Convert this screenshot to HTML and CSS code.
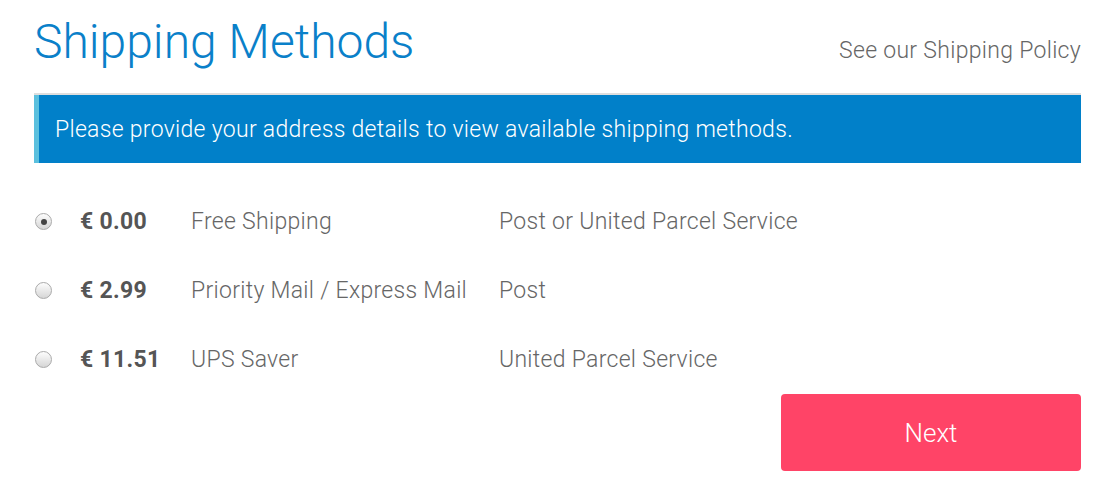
FILE: index.html
```html
<!DOCTYPE html>
<html lang="en">
<head>
    <meta charset="UTF-8">
    <meta name="viewport" content="width=device-width, initial-scale=1.0">
    <title>Shipping Methods</title>
    <link rel="stylesheet" href="styles.css">
</head>
<body>
    <div class="checkout">
        <div class="header">
            <h1>Shipping Methods</h1>
            <a class="policy-link" href="#">See our Shipping Policy</a>
        </div>

        <div class="alert">Please provide your address details to view available shipping methods.</div>

        <ul class="methods">
            <li>
                <input type="radio" name="shipping" class="radio" checked>
                <span class="price">€ 0.00</span>
                <span class="name">Free Shipping</span>
                <span class="carrier">Post or United Parcel Service</span>
            </li>
            <li>
                <input type="radio" name="shipping" class="radio">
                <span class="price">€ 2.99</span>
                <span class="name">Priority Mail / Express Mail</span>
                <span class="carrier">Post</span>
            </li>
            <li>
                <input type="radio" name="shipping" class="radio">
                <span class="price">€ 11.51</span>
                <span class="name">UPS Saver</span>
                <span class="carrier">United Parcel Service</span>
            </li>
        </ul>

        <div class="actions">
            <button class="next-btn">Next</button>
        </div>
    </div>
</body>
</html>
```

FILE: styles.css
```css
body {
    font-family: Roboto, "Liberation Sans", sans-serif;
    font-weight: 300;
    margin: 0;
    background-color: #fff;
}
.checkout {
    padding: 14px 12px 0 34px;
}
.header {
    display: flex;
    justify-content: space-between;
    align-items: baseline;
    padding-bottom: 23px;
    border-bottom: 2px solid #dedede;
}
h1 {
    margin: 0;
    font-size: 48px;
    font-weight: 300;
    line-height: 56px;
    color: #0a80c9;
}
.policy-link {
    font-size: 23px;
    letter-spacing: 0.3px;
    line-height: 26px;
    color: #666;
    text-decoration: none;
}
.alert {
    background-color: #0180c9;
    border-left: 5px solid #5bc0de;
    color: #fff;
    font-size: 23px;
    letter-spacing: 0.3px;
    line-height: 26px;
    padding: 22px 16px 20px 16px;
}
.methods {
    list-style-type: none;
    margin: 24px 0 0 0;
    padding: 0;
}
.methods li {
    display: grid;
    grid-template-columns: 46px 111px 308px 1fr;
    align-items: center;
    height: 69px;
    font-size: 23px;
    letter-spacing: 0.3px;
    line-height: 26px;
    color: #666;
}
.radio {
    appearance: none;
    -webkit-appearance: none;
    width: 17px;
    height: 17px;
    margin: 0 0 0 1px;
    border: 1px solid #aaa;
    border-radius: 50%;
    background: linear-gradient(#fdfdfd, #d6d6d6);
    display: flex;
    align-items: center;
    justify-content: center;
}
.radio:checked::after {
    content: "";
    width: 6px;
    height: 6px;
    border-radius: 50%;
    background-color: #444;
}
.price {
    font-weight: 700;
    color: #555;
}
.actions {
    display: flex;
    justify-content: flex-end;
}
.next-btn {
    width: 300px;
    height: 77px;
    background-color: #ff4467;
    color: #fff;
    border: none;
    border-radius: 4px;
    font-family: Roboto, "Liberation Sans", sans-serif;
    font-weight: 300;
    font-size: 26px;
    cursor: pointer;
}
```
